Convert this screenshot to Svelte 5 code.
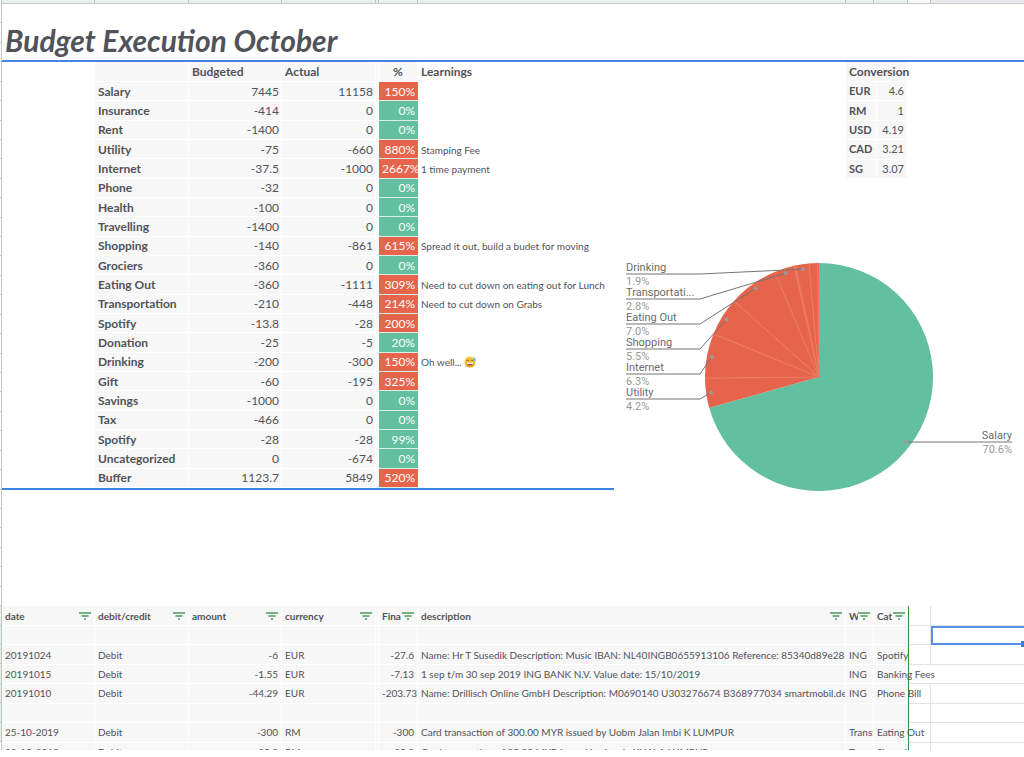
<script>
  const categories = [
    { name: 'Salary', budgeted: 7445, actual: 11158, pct: '150%', over: true },
    { name: 'Insurance', budgeted: -414, actual: 0, pct: '0%' },
    { name: 'Rent', budgeted: -1400, actual: 0, pct: '0%' },
    { name: 'Utility', budgeted: -75, actual: -660, pct: '880%', over: true, note: 'Stamping Fee' },
    { name: 'Internet', budgeted: -37.5, actual: -1000, pct: '2667%', over: true, note: '1 time payment' },
    { name: 'Phone', budgeted: -32, actual: 0, pct: '0%' },
    { name: 'Health', budgeted: -100, actual: 0, pct: '0%' },
    { name: 'Travelling', budgeted: -1400, actual: 0, pct: '0%' },
    { name: 'Shopping', budgeted: -140, actual: -861, pct: '615%', over: true, note: 'Spread it out, build a budet for moving' },
    { name: 'Grociers', budgeted: -360, actual: 0, pct: '0%' },
    { name: 'Eating Out', budgeted: -360, actual: -1111, pct: '309%', over: true, note: 'Need to cut down on eating out for Lunch' },
    { name: 'Transportation', budgeted: -210, actual: -448, pct: '214%', over: true, note: 'Need to cut down on Grabs' },
    { name: 'Spotify', budgeted: -13.8, actual: -28, pct: '200%', over: true },
    { name: 'Donation', budgeted: -25, actual: -5, pct: '20%' },
    { name: 'Drinking', budgeted: -200, actual: -300, pct: '150%', over: true, note: 'Oh well...', emoji: true },
    { name: 'Gift', budgeted: -60, actual: -195, pct: '325%', over: true },
    { name: 'Savings', budgeted: -1000, actual: 0, pct: '0%' },
    { name: 'Tax', budgeted: -466, actual: 0, pct: '0%' },
    { name: 'Spotify', budgeted: -28, actual: -28, pct: '99%' },
    { name: 'Uncategorized', budgeted: 0, actual: -674, pct: '0%' },
    { name: 'Buffer', budgeted: 1123.7, actual: 5849, pct: '520%', over: true }
  ];

  const rates = [
    ['EUR', 4.6],
    ['RM', 1],
    ['USD', 4.19],
    ['CAD', 3.21],
    ['SG', 3.07]
  ];

  const transactions = [
    null,
    ['20191024', 'Debit', '-6', 'EUR', '-27.6', 'Name: Hr T Susedik Description: Music IBAN: NL40INGB0655913106 Reference: 85340d89e2852c0', 'ING', 'Spotify'],
    ['20191015', 'Debit', '-1.55', 'EUR', '-7.13', '1 sep t/m 30 sep 2019 ING BANK N.V. Value date: 15/10/2019', 'ING', 'Banking Fees'],
    ['20191010', 'Debit', '-44.29', 'EUR', '-203.734', 'Name: Drillisch Online GmbH Description: M0690140 U303276674 B368977034 smartmobil.de Rg', 'ING', 'Phone Bill'],
    null,
    ['25-10-2019', 'Debit', '-300', 'RM', '-300', 'Card transaction of 300.00 MYR issued by Uobm Jalan Imbi K LUMPUR', 'Transf', 'Eating Out'],
    ['22-10-2019', 'Debit', '-25.8', 'RM', '-25.8', 'Card transaction of 25.80 MYR issued by Joocla KUALA LUMPUR', 'Transf', 'Shopping']
  ];
  const emptyRow = ['', '', '', '', '', '', '', ''];

  const headers = ['date', 'debit/credit', 'amount', 'currency', 'Fina', 'description', 'W', 'Cat'];

  // pie chart
  const cx = 205;
  const cy = 127;
  const r = 114;
  const spent = categories.filter((c) => c.actual !== 0 && c.name !== 'Uncategorized' && c.name !== 'Buffer');
  const total = spent.reduce((sum, c) => sum + Math.abs(c.actual), 0);

  function point(share, radius) {
    const a = share * Math.PI * 2;
    return [cx + radius * Math.sin(a), cy - radius * Math.cos(a)];
  }

  let acc = 0;
  const slices = spent.map((c) => {
    const start = acc / total;
    acc += Math.abs(c.actual);
    const end = acc / total;
    const [x1, y1] = point(start, r);
    const [x2, y2] = point(end, r);
    return {
      name: c.name,
      share: end - start,
      d: `M${cx} ${cy}L${x1} ${y1}A${r} ${r} 0 ${end - start > 0.5 ? 1 : 0} 1 ${x2} ${y2}Z`,
      edge: [x2, y2],
      dot: point((start + end) / 2, 109)
    };
  });

  const labels = ['Drinking', 'Transportation', 'Eating Out', 'Shopping', 'Internet', 'Utility'].map((name, i) => {
    const slice = slices.find((s) => s.name === name);
    return {
      text: name.length > 12 ? name.slice(0, 12) + '...' : name,
      pct: (slice.share * 100).toFixed(1) + '%',
      y: 24 + i * 25,
      dot: slice.dot
    };
  });
  const salary = slices[0];
</script>

<div class="sheet">
  <div class="gutter">
    {#each Array(38) as _, i}
      <div class="tick" class:filtered={i > 30}></div>
    {/each}
    <div class="tail"></div>
  </div>

  <main>
    <div class="columns">
      <i class="w93"></i><i class="w94"></i><i class="w93"></i><i class="w94"></i><i class="w3"></i><i class="w39"></i>
      <i class="grow"></i><i class="w28"></i><i class="w34"></i><i class="w23"></i><i class="w93 last"></i>
    </div>

    <h1>Budget Execution October</h1>

    <div class="overview">
      <table class="budget">
        <colgroup>
          <col class="w93" /><col class="w94" /><col class="w93" /><col class="w94" /><col class="w3" /><col class="w39" /><col />
        </colgroup>
        <thead>
          <tr>
            <td class="blank"></td>
            <td></td>
            <th scope="col">Budgeted</th>
            <th scope="col">Actual</th>
            <td></td>
            <th scope="col" class="center">%</th>
            <th scope="col" class="blank">Learnings</th>
          </tr>
        </thead>
        <tbody>
          {#each categories as c}
            <tr>
              <td class="blank"></td>
              <th scope="row">{c.name}</th>
              <td class="num">{c.budgeted}</td>
              <td class="num">{c.actual}</td>
              <td></td>
              <td class="num pct" class:over={c.over}>{c.pct}</td>
              <td class="blank note">
                {c.note ?? ''}
                {#if c.emoji}
                  <svg class="emoji" viewBox="0 0 24 24" role="img" aria-label="grinning face with sweat">
                    <circle cx="12" cy="12" r="11" fill="#f9c33a" />
                    <path d="M1.500 15a11 11 0 0 0 21 0a12 9 0 0 1-21 0Z" fill="#e89a2a" />
                    <path d="M5 9.500q2.500-3 5 0M13 9.500q2.500-3 5 0" fill="none" stroke="#6b4216" stroke-width="1.600" />
                    <path d="M5 13h14q-.5 6-7 6t-7-6Z" fill="#8a5320" />
                    <path d="M5.500 13h13l-.5 3h-12Z" fill="#fff" />
                    <path d="M20 1.500q4.500 5.500 3.500 7.500a3 3 0 0 1-5.500-1q0-2 2-6.500Z" fill="#6ab8ea" />
                  </svg>
                {/if}
              </td>
            </tr>
          {/each}
        </tbody>
      </table>

      <div class="side">
        <table class="rates">
          <thead>
            <tr><th colspan="2" scope="colgroup">Conversion</th></tr>
          </thead>
          <tbody>
            {#each rates as [currency, rate]}
              <tr>
                <th scope="row" class="w28">{currency}</th>
                <td class="num">{rate}</td>
              </tr>
            {/each}
          </tbody>
        </table>

        <svg class="chart" viewBox="0 0 410 250" role="img" aria-label="Spending by category">
          {#each slices as s, i}
            <path d={s.d} fill={i === 0 ? '#62bfa0' : '#e6644b'} />
          {/each}
          {#each slices.slice(1, -1) as s}
            <line class="divider" x1={cx} y1={cy} x2={s.edge[0]} y2={s.edge[1]} />
          {/each}
          {#each labels as l}
            <text class="name" x="12" y={l.y - 3}>{l.text}</text>
            <polyline points="12,{l.y} 86,{l.y} {l.dot[0]},{l.dot[1]}" />
            <circle cx={l.dot[0]} cy={l.dot[1]} r="2" />
            <text class="share" x="12" y={l.y + 11}>{l.pct}</text>
          {/each}
          <text class="name end" x="398" y="189">Salary</text>
          <polyline points="{salary.dot[0]},192 398,192" />
          <circle cx={salary.dot[0]} cy="192" r="2" />
          <text class="share end" x="398" y="203">{(salary.share * 100).toFixed(1)}%</text>
        </svg>
      </div>
    </div>

    <div class="log">
      <table>
        <colgroup>
          <col class="w93" /><col class="w94" /><col class="w93" /><col class="w94" /><col class="w3" /><col class="w39" />
          <col /><col class="w28" /><col class="w34" /><col class="w23" /><col class="w93" />
        </colgroup>
        <thead>
          <tr>
            {#each headers as h, i}
              {#if i === 4}<td></td>{/if}
              <th scope="col" class:edge={i === 7}>
                <div class="head">
                  <span>{h}</span>
                  <button type="button" aria-label="Filter {h}">
                    <svg viewBox="0 0 12 8"><path d="M0 1h12M2.500 4h7M5 7h2" /></svg>
                  </button>
                </div>
              </th>
            {/each}
            <td class="open"></td>
            <td class="open"></td>
          </tr>
        </thead>
        <tbody>
          {#each transactions as t, row}
            <tr>
              {#each t ?? emptyRow as value, i}
                {#if i === 4}<td></td>{/if}
                <td class:num={i === 2 || i === 4} class:tight={i === 5 || i === 6} class:edge={i === 7}>
                  {value}
                </td>
              {/each}
              <td class="open" class:spill={t && t[7].length > 10}></td>
              <td class="open" class:selected={row === 0}>
                {#if row === 0}<span class="handle"></span>{/if}
              </td>
            </tr>
          {/each}
        </tbody>
      </table>
    </div>
  </main>
</div>

<style>
  :global(body) { background: #fff; }

  .sheet { display: flex; overflow: hidden; color: #50535a; font-family: Lato, "Open Sans", sans-serif; font-size: 12px; line-height: 16px; }
  .gutter { display: flex; flex-direction: column; width: 2px; flex: none; box-sizing: border-box; border-right: 1px solid #c8c8c8; padding-top: 4px; }
  .tick { flex: 1; box-sizing: border-box; border-bottom: 1px solid #c8c8c8; }
  .tick.filtered { background: #dcefe0; }
  .tail { height: 8px; }
  main { flex: 1; min-width: 0; }

  .w94 { width: 94px; }
  .w93 { width: 93px; }
  .w39 { width: 39px; }
  .w34 { width: 34px; }
  .w28 { width: 28px; }
  .w23 { width: 23px; }
  .w3 { width: 3px; }

  /* column header strip */
  .columns { display: flex; height: 4px; box-sizing: border-box; border-bottom: 1px solid #c8c8c8; background: #e6f2e9; }
  .columns i { flex: none; box-sizing: border-box; border-right: 1px solid #bfc4c0; }
  .columns .grow { flex: 1; }
  .columns .w23 { background: #f8f9fa; }
  .columns .last { background: #e8eaed; border-right: 0; }

  h1 { margin: 0; padding: 17px 3px 0; height: 39px; border-bottom: 2px solid #4285e8; font-size: 30px; line-height: 38px; font-style: italic; font-weight: 700; white-space: nowrap; }

  table { border-collapse: separate; border-spacing: 0; table-layout: fixed; }
  th, td { box-sizing: border-box; padding: 0 3px; border-right: 1px solid #fff; border-bottom: 1px solid #fff; background: #f7f7f7; text-align: left; white-space: nowrap; line-height: 16px; }
  thead tr { height: 20px; }
  .num { text-align: right; }
  .center { text-align: center; }
  .blank { background: none; }

  .overview { display: flex; align-items: flex-start; }
  .budget { flex: none; width: 612px; height: 428px; border-bottom: 2px solid #3b82e8; }
  .budget td, .budget th { padding-top: 1px; }
  .budget .num { padding-right: 2px; }
  .budget .pct { background: #62bfa0; color: #fff; border-color: #d9efe7; border-right: 0; padding: 1px 3px 0; overflow: hidden; }
  .budget .pct.over { background: #e6644b; }
  .budget .note { font-size: 10px; }
  .emoji { width: 12px; height: 12px; vertical-align: -2px; }

  .side { flex: 1; min-width: 0; }
  .rates { width: 62px; height: 117px; margin: 0 116px 71px auto; font-size: 11px; }
  .rates thead { font-size: 12px; }

  .chart { display: block; width: 100%; max-width: 410px; margin-left: auto; }
  .divider { stroke: #ea7a60; stroke-width: 1; }
  .chart polyline { fill: none; stroke: #757575; stroke-width: 1; }
  .chart circle { fill: #999; }
  .chart text { font-family: Roboto, sans-serif; font-size: 11px; }
  .chart .name { fill: #6b6b6b; }
  .chart .share { fill: #999; }
  .chart .end { text-anchor: end; }

  .log { height: 144px; margin-top: 106px; overflow: hidden; font-size: 10px; }
  .log table { width: 100%; height: 156px; }
  .log tbody tr { height: 19px; }
  .log th, .log td { overflow: hidden; }
  .head { display: flex; align-items: center; justify-content: space-between; }
  .head span { min-width: 0; overflow: hidden; }
  .head button { flex: none; display: flex; width: 12px; height: 12px; padding: 0; border: 0; background: none; align-items: center; }
  .head svg { width: 12px; height: 8px; }
  .head path { fill: none; stroke: #4b9a5f; stroke-width: 1.5px; }
  .log .tight { padding-right: 0; }
  /* shadow instead of a border, so the line has no breaks between rows */
  .log .edge { position: relative; border-right: 0; box-shadow: 1px 0 #388e3c; overflow: visible; }
  .log .open { border-color: #e2e2e2; background: none; }
  .log .open:last-child { border-right: 0; }
  .log .spill { border-right-color: transparent; }
  .log .selected { position: relative; overflow: visible; border: 2px solid #5a8fe8; }
  .handle { position: absolute; right: -1px; bottom: -4px; width: 4px; height: 6px; background: #3b78e0; }
</style>
